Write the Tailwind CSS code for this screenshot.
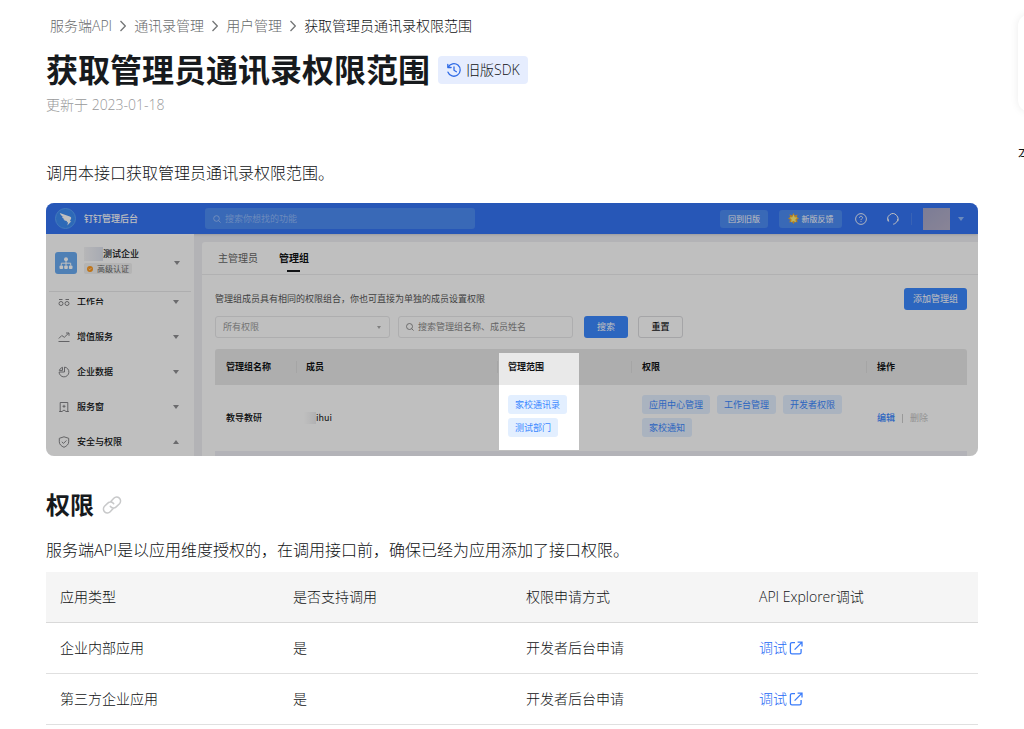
<!DOCTYPE html>
<html lang="zh-CN">
  <head>
    <meta charset="UTF-8">
    <meta name="viewport" content="width=device-width, initial-scale=1.0">
    <title>获取管理员通讯录权限范围</title>
    <script src="https://cdn.jsdelivr.net/npm/@tailwindcss/browser@4"></script>
  </head>
  <body class="min-h-screen overflow-x-hidden bg-white font-['Open_Sans','Noto_Sans_CJK_SC',sans-serif] font-light text-[#101214]">
    <div class="flex overflow-hidden">
      <!-- Main Content -->
      <main class="min-w-0 flex-1 pl-[46px] pr-10">
        <nav class="mt-4 flex h-5 items-center pl-1 text-sm leading-5 text-[#686a6b]" aria-label="面包屑">
          <a href="#">服务端API</a>
          <svg class="mx-2 h-3 w-[6px]" viewBox="0 0 6 12" fill="none" stroke="#747677" stroke-width="1.3"><path d="M0.5 1 5.3 6 0.5 11"/></svg>
          <a href="#">通讯录管理</a>
          <svg class="mx-2 h-3 w-[6px]" viewBox="0 0 6 12" fill="none" stroke="#747677" stroke-width="1.3"><path d="M0.5 1 5.3 6 0.5 11"/></svg>
          <a href="#">用户管理</a>
          <svg class="mx-2 h-3 w-[6px]" viewBox="0 0 6 12" fill="none" stroke="#747677" stroke-width="1.3"><path d="M0.5 1 5.3 6 0.5 11"/></svg>
          <a href="#" class="text-[#101214]">获取管理员通讯录权限范围</a>
        </nav>

        <div class="mt-3 flex h-11 items-center gap-2">
          <h1 class="text-[32px] font-bold leading-[44px] text-[#171a1d]">获取管理员通讯录权限范围</h1>
          <button type="button" class="flex h-7 items-center gap-1 rounded bg-[#e6edfe] px-2 text-sm">
            <svg class="h-4 w-4" viewBox="0 0 16 16" fill="none" stroke="#2f6be6" stroke-width="1.3" stroke-linecap="round" stroke-linejoin="round"><path d="M2.2 5.2A6.3 6.3 0 1 1 2 10.2M1.8 2.3v3.2h3.3M8 4.8v3.5l2.4 1.4"/></svg>
            旧版SDK
          </button>
        </div>
        <p class="mt-[3px] text-sm leading-5 text-[#97989a]">更新于 2023-01-18</p>

        <p class="mt-[46px] text-base leading-6">调用本接口获取管理员通讯录权限范围。</p>

        <!-- Admin console preview -->
        <figure class="relative mt-[18px] flex h-[253px] flex-col overflow-hidden rounded-lg bg-[#efeff3] font-['Noto_Sans_CJK_SC',sans-serif] text-[9px] font-normal leading-3">
          <div class="flex h-[31px] shrink-0 items-center bg-[#3574f5] pl-[9px] pr-[14px] text-white shadow-sm">
            <svg class="h-[21px] w-[21px]" viewBox="0 0 22 22"><circle cx="11" cy="11" r="10.5" fill="#3d8df5" stroke="#5ba4fa"/><path d="M5 5.200 15.500 8.800c1.500.6 1.700 1.600 1.200 2.800l-1.200 2.200h1.600l-4.200 4.500.8-3.400h-1.600l.6-1.300c-2 .1-3.300-.7-3.800-2l1.500.1C8.700 11.200 7.600 10.300 7.300 9.200l1.600.1C7 8.300 5.700 7 5 5.200z" fill="#fff"/></svg>
            <span class="ml-2 w-[121px] shrink-0 font-medium">钉钉管理后台</span>
            <label class="flex h-[21px] w-[270px] items-center gap-1 rounded-[3px] bg-[#4d8cf5] px-2">
              <svg class="h-2 w-2 shrink-0" viewBox="0 0 8 8" fill="none" stroke="#a6c8fc" stroke-width="0.8"><circle cx="3.500" cy="3.500" r="2.800"/><path d="m5.600 5.600 2 2"/></svg>
              <input type="text" placeholder="搜索你想找的功能" class="min-w-0 flex-1 outline-none placeholder:text-[#8fb9fb]" aria-label="搜索功能">
            </label>
            <div class="ml-auto flex items-center">
              <button type="button" class="h-[18px] w-12 rounded-[3px] bg-[#4d8cf5] text-[8px]">回到旧版</button>
              <button type="button" class="ml-[11px] flex h-[18px] w-[63px] items-center justify-center gap-[3px] rounded-[3px] bg-[#4d8cf5] text-[8px]">
                <svg class="h-[11px] w-[11px]" viewBox="0 0 11 11"><path d="M5.500 0 6.800 2.500 9.600 1.400 8.800 4.200 11 5.200 9 6.700 9.600 9.600 7.200 8.600 5.500 11 3.800 8.600 1.400 9.600 2 6.700 0 5.200 2.200 4.200 1.400 1.400 4.200 2.500z" fill="#f0a92c"/><path d="m5.500 1.500 1.200 2.800 2.800.3-2.100 1.900.6 2.900-2.500-1.500L3 9.400l.6-2.900-2.100-1.900 2.800-.3z" fill="#fff07a"/></svg>
                新版反馈
              </button>
              <svg class="ml-[13px] h-3 w-3" viewBox="0 0 12 12" fill="none" stroke="#fff" stroke-width="0.9"><circle cx="6" cy="6" r="5.400"/><path d="M4.500 4.900C4.500 3.900 5.100 3.300 6 3.300s1.500.6 1.500 1.400C7.500 5.700 6 5.800 6 7.100M6 8v.9"/></svg>
              <svg class="ml-5 h-3 w-3" viewBox="0 0 12 12" fill="none" stroke="#fff" stroke-width="1"><path d="M1.700 8.500a5 5 0 1 1 7.800.6C8.800 10.200 7.800 10.900 6.200 11.200M1.100 5.800v2.400M10.900 5.800v2.400"/></svg>
              <span class="ml-3 h-3 w-px bg-[#4d84f2]"></span>
              <span class="ml-[11px] h-[22px] w-[27px] bg-linear-to-br from-[#a5a6c8] to-[#b7b1c8]"></span>
              <svg class="ml-2 h-1 w-[6px]" viewBox="0 0 6 4"><path d="M0 0h6L3 4z" fill="#8fb9fb"/></svg>
            </div>
          </div>

          <div class="flex min-h-0 flex-1">
            <!-- Sidebar -->
            <div class="w-[148px] shrink-0 bg-white">
              <div class="mx-[3px] flex h-[58px] items-center border-b border-[#e8e8ea] pl-[6px] pr-[11px]">
                <svg class="h-[22px] w-[22px] shrink-0" viewBox="0 0 22 22"><rect width="22" height="22" rx="3" fill="#6aabf2"/><g fill="#fff"><circle cx="11" cy="7.300" r="2"/><rect x="4.500" y="13.500" width="3.600" height="3.600" rx="1"/><rect x="9.200" y="13.500" width="3.600" height="3.600" rx="1"/><rect x="13.900" y="13.500" width="3.600" height="3.600" rx="1"/></g><path d="M6.300 13.500v-2.300h9.400v2.300M11 9v4.500" fill="none" stroke="#fff"/></svg>
                <div class="ml-[7px] flex flex-col items-start pb-1">
                  <span class="flex h-[14px] items-center font-medium"><span class="h-[14px] w-[19px] bg-linear-to-r from-[#f4f4f6] to-[#dfe3ee]"></span>测试企业</span>
                  <span class="mt-[2px] flex h-[11px] items-center gap-1 rounded-[2px] bg-[#f0f0f0] px-[3px] text-[8px] text-[#666]">
                    <svg class="h-[6px] w-[6px]" viewBox="0 0 6 6"><circle cx="3" cy="3" r="3" fill="#ff9a1f"/><path d="m1.700 3 .9.900 1.700-1.700" stroke="#fff" stroke-width="0.700" fill="none"/></svg>高级认证
                  </span>
                </div>
                <svg class="ml-auto h-1 w-[6px]" viewBox="0 0 6 4"><path d="M0 0h6L3 4z" fill="#8f8f92"/></svg>
              </div>
              <ul class="-mt-2 pl-3 pr-[15px] font-medium">
                <li class="flex h-[35px] items-center gap-[7px]">
                  <svg class="h-3 w-3" viewBox="0 0 12 12" fill="none" stroke="#77777a" stroke-width="0.900"><circle cx="3" cy="7.500" r="2"/><circle cx="9" cy="7.500" r="2"/><path d="M1 3.500h3.500M7.500 3.500H11"/></svg>
                  <span class="flex h-[7px] items-center overflow-hidden">工作台</span>
                  <svg class="ml-auto h-1 w-[6px]" viewBox="0 0 6 4"><path d="M0 0h6L3 4z" fill="#8f8f92"/></svg>
                </li>
                <li class="flex h-[35px] items-center gap-[7px]">
                  <svg class="h-3 w-3" viewBox="0 0 12 12" fill="none" stroke="#77777a" stroke-width="0.900"><path d="M.5 10.500h11M.8 7.500l3-3 2.500 1.800 4.500-4.300M8 2h3v2.800"/></svg>
                  增值服务
                  <svg class="ml-auto h-1 w-[6px]" viewBox="0 0 6 4"><path d="M0 0h6L3 4z" fill="#8f8f92"/></svg>
                </li>
                <li class="flex h-[35px] items-center gap-[7px]">
                  <svg class="h-3 w-3" viewBox="0 0 12 12" fill="none" stroke="#77777a" stroke-width="0.900"><path d="M6.500 1.100A4.900 4.900 0 1 1 1.100 6H6.500zM4.500 1.300A4.900 4.900 0 0 0 1.300 4.400H4.500z"/></svg>
                  企业数据
                  <svg class="ml-auto h-1 w-[6px]" viewBox="0 0 6 4"><path d="M0 0h6L3 4z" fill="#8f8f92"/></svg>
                </li>
                <li class="flex h-[35px] items-center gap-[7px]">
                  <svg class="h-3 w-3" viewBox="0 0 12 12" fill="none" stroke="#77777a" stroke-width="0.900"><path d="M2.200 1.500h7.600M2.200 1.500V11M9.800 1.500V11M1.200 10.500H4L6 9l2 1.500h2.800M6 3.800v3M4.500 5.300h3"/></svg>
                  服务窗
                  <svg class="ml-auto h-1 w-[6px]" viewBox="0 0 6 4"><path d="M0 0h6L3 4z" fill="#8f8f92"/></svg>
                </li>
                <li class="flex h-[35px] items-center gap-[7px]">
                  <svg class="h-3 w-3" viewBox="0 0 12 12" fill="none" stroke="#77777a" stroke-width="0.900"><path d="M6 .8 10.700 2.300v3.500c0 2.600-2 4.300-4.700 5.500C3.300 10.100 1.300 8.400 1.300 5.800V2.300zM3.800 5.800l1.700 1.600L8.400 4.500"/></svg>
                  安全与权限
                  <svg class="ml-auto h-1 w-[6px]" viewBox="0 0 6 4"><path d="M0 4h6L3 0z" fill="#8f8f92"/></svg>
                </li>
              </ul>
            </div>

            <!-- Admin groups -->
            <div class="ml-2 mt-2 min-w-0 flex-1 rounded-tl-[3px] bg-white">
              <div class="flex h-[33px] items-center gap-[21px] border-b border-[#ececee] pl-4 text-[10px]">
                <a href="#" class="text-[#666]">主管理员</a>
                <a href="#" class="relative font-bold after:absolute after:-bottom-2 after:left-2 after:h-[2px] after:w-[13px] after:bg-[#171a1d]">管理组</a>
              </div>
              <div class="pl-[13px] pr-[11px] pt-[13px]">
                <div class="flex h-[22px] items-center justify-between">
                  <p class="text-[#555]">管理组成员具有相同的权限组合，你也可直接为单独的成员设置权限</p>
                  <button type="button" class="h-[22px] w-[63px] rounded-[3px] bg-[#3b88ff] text-white">添加管理组</button>
                </div>
                <div class="mt-[6px] flex h-[22px] items-center">
                  <div class="relative w-[175px]">
                    <select class="h-[22px] w-full appearance-none rounded-[3px] border border-[#e8e8ea] pl-[7px] text-[#999]" aria-label="权限">
                      <option>所有权限</option>
                    </select>
                    <svg class="absolute right-[9px] top-[10px] h-[3px] w-1" viewBox="0 0 4 3"><path d="M0 0h4L2 3z" fill="#aaa"/></svg>
                  </div>
                  <label class="ml-2 flex h-[22px] w-[175px] items-center gap-1 rounded-[3px] border border-[#e8e8ea] px-[7px]">
                    <svg class="h-2 w-2 shrink-0" viewBox="0 0 8 8" fill="none" stroke="#777" stroke-width="0.800"><circle cx="3.500" cy="3.500" r="3"/><path d="m5.600 5.600 2 2"/></svg>
                    <input type="text" placeholder="搜索管理组名称、成员姓名" class="min-w-0 flex-1 outline-none placeholder:text-[#888]" aria-label="搜索管理组">
                  </label>
                  <button type="button" class="ml-[11px] h-[22px] w-11 rounded-[3px] bg-[#3b88ff] text-white">搜索</button>
                  <button type="button" class="ml-[10px] h-[22px] w-[45px] rounded-[3px] border border-[#dcdcdf] font-medium">重置</button>
                </div>

                <table class="mt-[11px] w-full table-fixed text-left">
                  <thead class="bg-[#e9e9e9]">
                    <tr class="h-9">
                      <th class="w-[81px] rounded-tl-[3px] pl-[11px] font-bold">管理组名称</th>
                      <th class="w-[201px] p-0 font-bold"><span class="block border-l border-[#dcdcdc] pl-[9px]">成员</span></th>
                      <th class="w-[134px] p-0 font-bold"><span class="block border-l border-[#dcdcdc] pl-[10px]">管理范围</span></th>
                      <th class="w-[235px] p-0 font-bold"><span class="block border-l border-[#dcdcdc] pl-[10px]">权限</span></th>
                      <th class="rounded-tr-[3px] p-0 font-bold"><span class="block border-l border-[#dcdcdc] pl-[10px]">操作</span></th>
                    </tr>
                  </thead>
                  <tbody>
                    <tr class="h-[66px]">
                      <td class="pl-[11px] font-medium">教导教研</td>
                      <td class="pl-2"><span class="inline-block h-3 w-3 bg-linear-to-r from-white to-[#ececee] align-middle"></span>ihui</td>
                      <td class="pl-[11px] pt-[10px] align-top">
                        <div class="flex flex-col items-start gap-1 text-[#3b88ff]">
                          <span class="rounded-[3px] bg-[#e3efff] px-[7px] py-[3px] leading-[13px]">家校通讯录</span>
                          <span class="rounded-[3px] bg-[#e3efff] px-[7px] py-[3px] leading-[13px]">测试部门</span>
                        </div>
                      </td>
                      <td class="pl-[11px] pt-[10px] align-top">
                        <div class="flex flex-wrap gap-x-[7px] gap-y-1 text-[#3b88ff]">
                          <span class="rounded-[3px] bg-[#e3efff] px-[7px] py-[3px] leading-[13px]">应用中心管理</span>
                          <span class="rounded-[3px] bg-[#e3efff] px-[7px] py-[3px] leading-[13px]">工作台管理</span>
                          <span class="rounded-[3px] bg-[#e3efff] px-[7px] py-[3px] leading-[13px]">开发者权限</span>
                          <span class="rounded-[3px] bg-[#e3efff] px-[7px] py-[3px] leading-[13px]">家校通知</span>
                        </div>
                      </td>
                      <td class="pl-[11px]">
                        <div class="flex items-center gap-[7px]">
                          <a href="#" class="font-medium text-[#3b88ff]">编辑</a>
                          <span class="h-[9px] w-px bg-[#ccc]"></span>
                          <a href="#" class="text-[#c4c4c4]">删除</a>
                        </div>
                      </td>
                    </tr>
                    <tr class="h-9 bg-[#efeff6]"><td colspan="5"></td></tr>
                  </tbody>
                </table>
              </div>
            </div>
          </div>

          <!-- Spotlight over the scope column, dims everything around it -->
          <div class="absolute left-[453px] top-[150px] h-[97px] w-20 shadow-[0_0_0_2000px_rgba(0,0,0,0.25)]"></div>
        </figure>

        <div class="mt-8 flex items-center gap-2">
          <h2 class="text-2xl font-bold leading-[34px] text-[#171a1d]">权限</h2>
          <a href="#" aria-label="权限链接">
            <svg class="h-5 w-5" viewBox="0 0 20 20" fill="none" stroke="#c8c9ca" stroke-width="1.500" stroke-linecap="round"><path d="M8.600 6.800 11.800 3.300a3.900 3.900 0 0 1 5.700 5.400l-3.300 3.200a3.900 3.900 0 0 1-5.900-.6M11.400 13.200l-3.200 3.500a3.900 3.900 0 0 1-5.700-5.400l3.300-3.200a3.900 3.900 0 0 1 5.900.6"/></svg>
          </a>
        </div>
        <p class="mt-4 text-base leading-6">服务端API是以应用维度授权的，在调用接口前，确保已经为应用添加了接口权限。</p>

        <table class="mt-[10px] w-full table-fixed text-left text-sm leading-5">
          <thead class="bg-[#f5f5f5]">
            <tr class="h-[50px] border-b border-[#d9d9d9]">
              <th class="pl-[14px] font-light">应用类型</th>
              <th class="pl-[14px] font-light">是否支持调用</th>
              <th class="pl-[14px] font-light">权限申请方式</th>
              <th class="pl-[14px] font-light">API Explorer调试</th>
            </tr>
          </thead>
          <tbody>
            <tr class="h-[51px] border-b border-[#e0e0e0]">
              <td class="pl-[14px]">企业内部应用</td>
              <td class="pl-[14px]">是</td>
              <td class="pl-[14px]">开发者后台申请</td>
              <td class="pl-[14px]">
                <a href="#" class="flex items-center gap-[2px] text-[#2468f5]">调试
                  <svg class="h-[14px] w-[14px]" viewBox="0 0 14 14" fill="none" stroke="#3a7cfa" stroke-width="1.300"><path d="M6 1.600H3A1.600 1.600 0 0 0 1.400 3.200v8A1.600 1.600 0 0 0 3 12.800h7.500a1.600 1.600 0 0 0 1.600-1.600V8M8.600 1.200h4.400v4.400M12.800 1.400 5.600 8.600"/></svg>
                </a>
              </td>
            </tr>
            <tr class="h-[51px] border-b border-[#e0e0e0]">
              <td class="pl-[14px]">第三方企业应用</td>
              <td class="pl-[14px]">是</td>
              <td class="pl-[14px]">开发者后台申请</td>
              <td class="pl-[14px]">
                <a href="#" class="flex items-center gap-[2px] text-[#2468f5]">调试
                  <svg class="h-[14px] w-[14px]" viewBox="0 0 14 14" fill="none" stroke="#3a7cfa" stroke-width="1.300"><path d="M6 1.600H3A1.600 1.600 0 0 0 1.400 3.200v8A1.600 1.600 0 0 0 3 12.800h7.500a1.600 1.600 0 0 0 1.600-1.600V8M8.600 1.200h4.400v4.400M12.800 1.400 5.600 8.600"/></svg>
                </a>
              </td>
            </tr>
          </tbody>
        </table>
      </main>

      <aside class="-mr-[194px] w-[200px] shrink-0 pt-[14px]">
        <div class="h-[98px] rounded-xl bg-white shadow-[0_0_8px_rgba(0,0,0,0.08)]"></div>
        <p class="mt-[31px] text-sm font-normal leading-5">本页目录</p>
      </aside>
    </div>
  </body>
</html>
